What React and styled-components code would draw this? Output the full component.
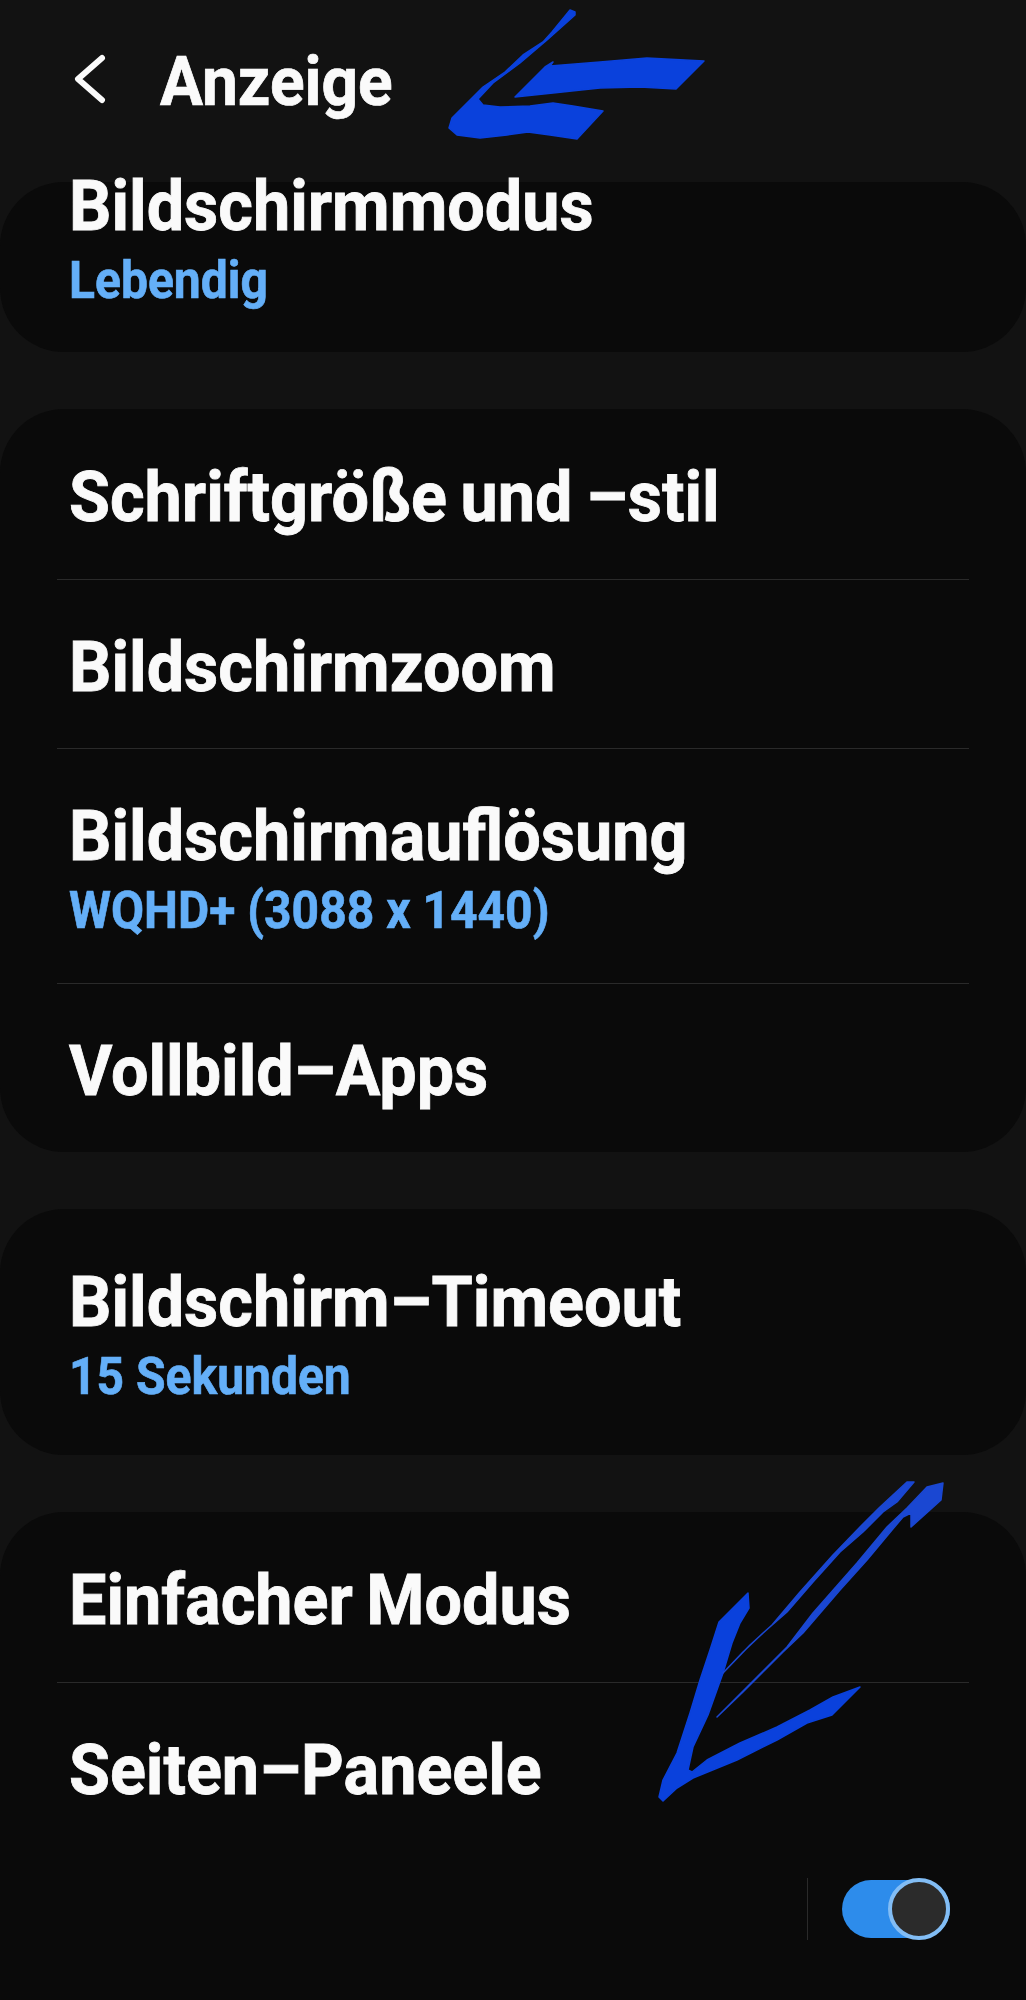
import React from 'react';
import styled, { createGlobalStyle } from 'styled-components';

const Global = createGlobalStyle`
  html, body { margin: 0; padding: 0; background: #121212; }
`;

const Page = styled.div`
  position: relative;
  width: 1026px;
  height: 2000px;
  overflow: hidden;
  background: #121212;
  font-family: Roboto, "Liberation Sans", sans-serif;
  color: #fafafa;
`;

const Header = styled.header`
  height: 182px;
  display: flex;
  align-items: center;
  gap: 52px;
  padding: 0 0 14px 72px;
  box-sizing: border-box;
`;

const BackIcon = styled.svg`
  width: 36px;
  height: 52px;
  flex: none;
  margin-top: -10px;
`;

const HeaderTitle = styled.h1`
  margin: 0;
  font-size: 64px;
  font-weight: 700;
  line-height: 72px;
  -webkit-text-stroke: 0.7px currentColor;
  transform: scaleY(1.06);
  transform-origin: 0 80%;
`;

const Card = styled.section`
  background: #0a0a0a;
  border-radius: 64px;
  margin-bottom: 57px;
  height: ${p => p.$height}px;
`;

const Row = styled.div`
  height: ${p => p.$height}px;
  box-sizing: border-box;
  padding: ${p => p.$top ?? 8}px 0 0 69px;
  display: flex;
  flex-direction: column;
  justify-content: ${p => (p.$top !== undefined ? 'flex-start' : 'center')};
`;

const Title = styled.div`
  font-size: 66.5px;
  font-weight: 700;
  line-height: 76px;
  word-spacing: -3px;
  white-space: nowrap;
  -webkit-text-stroke: 0.8px currentColor;
  transform: scaleY(1.06);
  transform-origin: 0 80%;
`;

const TopTitle = styled(Title)`
  margin-top: -13px;
`;

const Sub = styled.div`
  margin-top: 8px;
  font-size: 48px;
  font-weight: 700;
  line-height: 58px;
  color: #64aff8;
  white-space: nowrap;
  -webkit-text-stroke: 0.6px currentColor;
  transform: scaleY(1.08);
  transform-origin: 0 78%;
`;

const Divider = styled.hr`
  margin: 0 57px;
  border: 0;
  height: 1px;
  background: #2a2a2a;
`;

const SwitchRow = styled.div`
  display: flex;
  justify-content: flex-end;
  align-items: center;
  gap: 34px;
  padding: 27px 76px 0 0;
`;

const VLine = styled.div`
  width: 1px;
  height: 62px;
  background: #2a2a2a;
`;

const Track = styled.div`
  position: relative;
  width: 108px;
  height: 58px;
  border-radius: 29px;
  background: #2d8ceb;
`;

const Thumb = styled.div`
  position: absolute;
  right: 0;
  top: -2px;
  width: 62px;
  height: 62px;
  box-sizing: border-box;
  border-radius: 50%;
  background: #2b2b2b;
  border: 4px solid #82bdf5;
`;

const Scribble = styled.svg`
  position: absolute;
  left: 0;
  top: 0;
  width: 1026px;
  height: 2000px;
  pointer-events: none;
`;

const Ink = styled.path`
  fill: ${p => p.$thin ? '#1a47d2' : '#0a41dc'};
  stroke: ${p => p.$thin ? '#1a47d2' : '#0a41dc'};
  stroke-width: 1.5;
  stroke-linejoin: round;
`;

export default function App() {
  return (
    <Page>
      <Global />
      <Header>
        <BackIcon viewBox="0 0 36 52">
          <path d="M30 5 L6 26 L30 47" fill="none" stroke="#fafafa" strokeWidth="6" strokeLinecap="round" strokeLinejoin="round" />
        </BackIcon>
        <HeaderTitle>Anzeige</HeaderTitle>
      </Header>

      <Card $height={170}>
        <Row $height={170} $top={0}>
          <TopTitle>Bildschirmmodus</TopTitle>
          <Sub>Lebendig</Sub>
        </Row>
      </Card>

      <Card $height={743}>
        <Row $height={170}><Title>Schriftgröße und –stil</Title></Row>
        <Divider />
        <Row $height={168}><Title>Bildschirmzoom</Title></Row>
        <Divider />
        <Row $height={234} $top={50}>
          <Title>Bildschirmauflösung</Title>
          <Sub>WQHD+ (3088 x 1440)</Sub>
        </Row>
        <Divider />
        <Row $height={168}><Title>Vollbild–Apps</Title></Row>
      </Card>

      <Card $height={246}>
        <Row $height={246} $top={56}>
          <Title>Bildschirm–Timeout</Title>
          <Sub>15 Sekunden</Sub>
        </Row>
      </Card>

      <Card $height={600}>
        <Row $height={170}><Title>Einfacher Modus</Title></Row>
        <Divider />
        <Row $height={168}><Title>Seiten–Paneele</Title></Row>
        <SwitchRow>
          <VLine />
          <Track><Thumb /></Track>
        </SwitchRow>
      </Card>

      <Scribble viewBox="0 0 1026 2000">
        <Ink d="M575 12 L570 10 L552 32 L543 42 L523 55 L505 72 L483 87 L467 103 L452 118 L449 128 L457 135 L480 138 L507 135 L528 132 L550 135 L577 139 L603 111 L573 106 L553 103 L530 106 L500 107 L483 105 L478 99 L493 83 L520 63 L547 40 L575 15 Z" />
        <Ink d="M553 62 L550 66 L600 62 L647 58 L704 61 L676 89 L640 87 L600 88 L553 93 L515 97 L545 67 Z" />
        <Ink d="M748 1593 L749 1608 L740 1623 L732 1643 L723 1673 L718 1687 L708 1715 L693 1747 L688 1770 L692 1772 L707 1760 L740 1743 L777 1727 L810 1710 L833 1697 L860 1687 L832 1715 L807 1723 L777 1740 L737 1760 L693 1778 L677 1788 L663 1801 L659 1797 L663 1780 L677 1753 L690 1713 L700 1680 L710 1650 L719 1622 Z" />
        <Ink $thin d="M723 1673 L750 1645 L772 1625 L800 1592 L833 1555 L860 1527 L880 1507 L907 1482 L914 1482 L897 1502 L883 1512 L863 1532 L840 1552 L813 1582 L787 1612 L763 1633 L743 1652 Z" />
        <Ink $thin d="M717 1717 L757 1677 L787 1647 L813 1613 L857 1563 L887 1527 L907 1508 L927 1487 L943 1483 L941 1500 L911 1527 L911 1513 L903 1517 L892 1530 L867 1560 L840 1590 L803 1633 L783 1652 L743 1692 Z" />
      </Scribble>
    </Page>
  );
}
